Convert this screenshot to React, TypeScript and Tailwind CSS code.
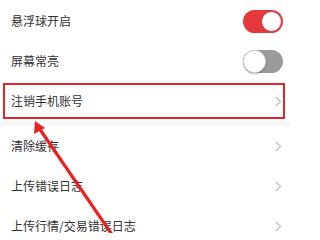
const FONT = { fontFamily: '"Noto Sans CJK SC", "Noto Sans", sans-serif' };

function Toggle({ on }: { on: boolean }) {
  return on ? (
    <div className="w-[40px] h-[23px] rounded-full bg-[#e5383d] flex items-center justify-end p-[1px]">
      <div className="w-[21px] h-[21px] rounded-full bg-white border border-[#c9343a]" />
    </div>
  ) : (
    <div className="w-[40px] h-[23px] rounded-full bg-[#9b9b9b] flex items-center justify-start">
      <div className="w-[23px] h-[23px] rounded-full bg-white border border-[#d8d8d8] shadow-[0_1px_2px_rgba(0,0,0,0.25)]" />
    </div>
  );
}

function Chevron() {
  return (
    <svg width="7" height="11" viewBox="0 0 7 11" className="mr-[1px]">
      <path d="M1 1 L5.5 5.5 L1 10" fill="none" stroke="#bdbdbd" strokeWidth="1.3" />
    </svg>
  );
}

function Row({ label, right }: { label: string; right: React.ReactNode }) {
  return (
    <div className="h-[40px] flex items-center justify-between pl-[11px] pr-[7px]">
      <span className="text-[12px] text-[#333] leading-none">{label}</span>
      {right}
    </div>
  );
}

export default function App() {
  return (
    <div className="relative w-[290px] h-[233px] overflow-hidden bg-white" style={FONT}>
      <div className="pt-[1px]">
        <Row label="悬浮球开启" right={<Toggle on />} />
        <Row label="屏幕常亮" right={<Toggle on={false} />} />
        <Row label="注销手机账号" right={<Chevron />} />
        <div className="h-[5px] bg-[#f8f8f8]" />
        <Row label="清除缓存" right={<Chevron />} />
        <Row label="上传错误日志" right={<Chevron />} />
        <Row label="上传行情/交易错误日志" right={<Chevron />} />
      </div>

      {/* annotation: red box */}
      <div className="absolute left-[3px] top-[83px] w-[282px] h-[36px] border-2 border-[#e2262b] pointer-events-none" />

      {/* annotation: arrow */}
      <svg className="absolute left-0 top-0 pointer-events-none" width="290" height="233" viewBox="0 0 290 233">
        <line x1="113" y1="236" x2="39" y2="128" stroke="#e8231f" strokeWidth="3.2" />
        <polygon points="35,121 45,128 34,134" fill="#e8231f" />
      </svg>
    </div>
  );
}
